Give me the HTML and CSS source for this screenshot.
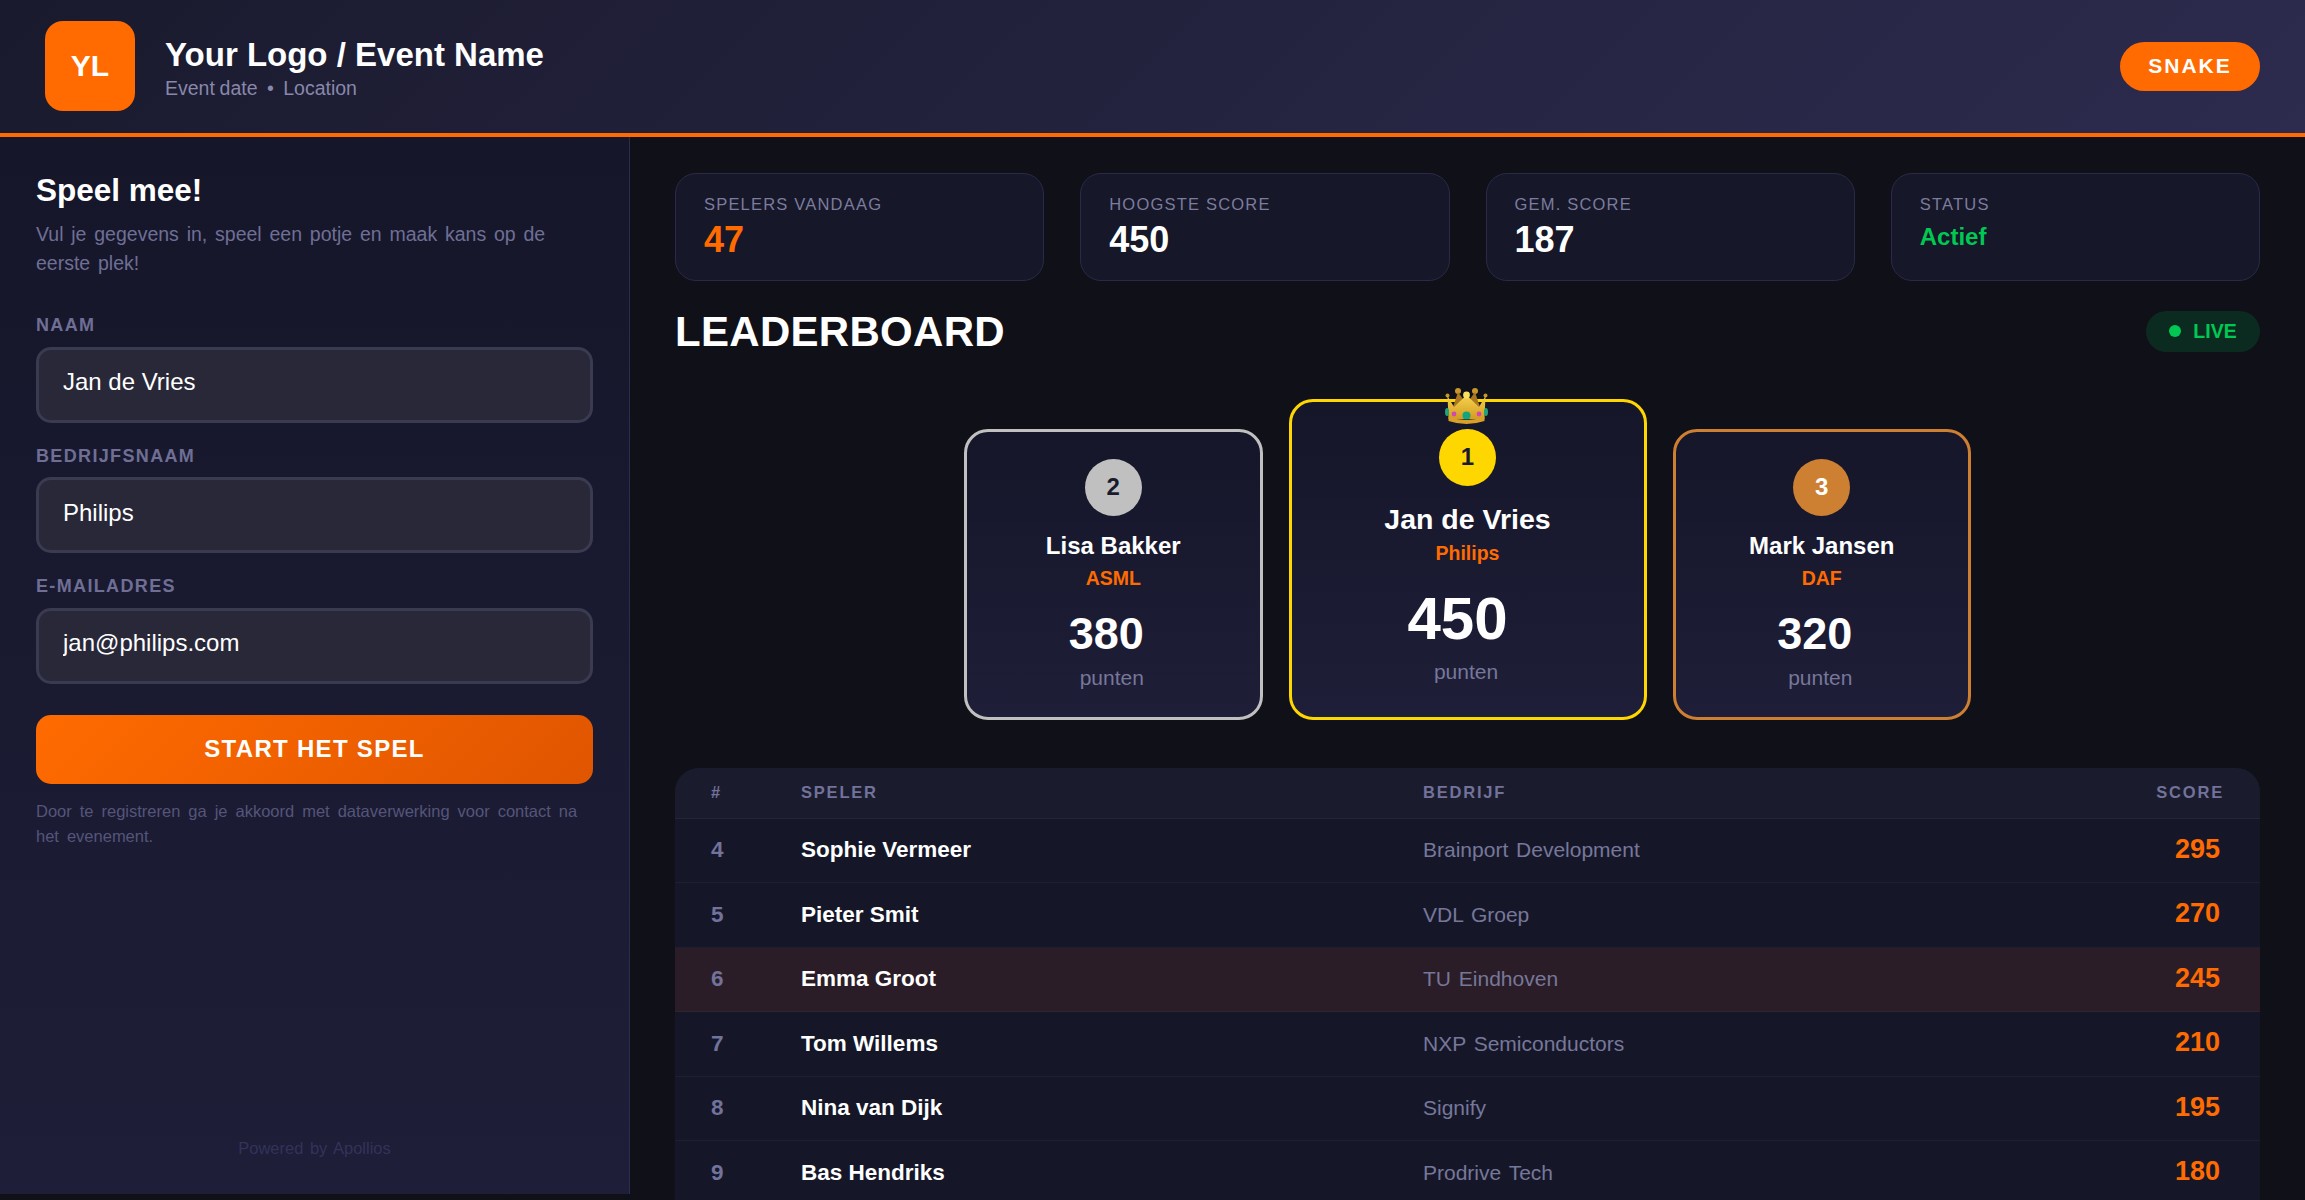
FILE: index.html
```html
<!DOCTYPE html>
<html lang="nl">
<head>
  <meta charset="UTF-8" />
  <title>Leaderboard - Snake</title>
  <link rel="stylesheet" href="styles.css">
</head>
<body>

  <div class="topbar">
    <div class="brand">
      <div class="logo">YL</div>
      <div>
        <div class="event-name">Your Logo / Event Name</div>
        <div class="event-meta">Event date &nbsp;•&nbsp; Location</div>
      </div>
    </div>
    <div class="game-badge">SNAKE</div>
  </div>

  <div class="layout">
    <div class="sidebar">
      <h2>Speel mee!</h2>
      <p class="intro">Vul je gegevens in, speel een potje en maak kans op de eerste plek!</p>

      <label class="field">
        <span>NAAM</span>
        <input type="text" value="Jan de Vries">
      </label>
      <label class="field">
        <span>BEDRIJFSNAAM</span>
        <input type="text" value="Philips">
      </label>
      <label class="field">
        <span>E-MAILADRES</span>
        <input type="text" value="jan@philips.com">
      </label>

      <button class="btn-start">START HET SPEL</button>
      <p class="legal">Door te registreren ga je akkoord met dataverwerking voor contact na het evenement.</p>
      <div class="powered">Powered by Apollios</div>
    </div>

    <div class="main">
      <div class="stats">
        <div class="stat">
          <div class="stat-label">SPELERS VANDAAG</div>
          <div class="stat-value orange">47</div>
        </div>
        <div class="stat">
          <div class="stat-label">HOOGSTE SCORE</div>
          <div class="stat-value">450</div>
        </div>
        <div class="stat">
          <div class="stat-label">GEM. SCORE</div>
          <div class="stat-value">187</div>
        </div>
        <div class="stat">
          <div class="stat-label">STATUS</div>
          <div class="stat-value status">Actief</div>
        </div>
      </div>

      <div class="board-head">
        <h1>LEADERBOARD</h1>
        <div class="live"><i></i>LIVE</div>
      </div>

      <div class="podium">
        <div class="pod silver">
          <div class="medal">2</div>
          <div class="pod-name">Lisa Bakker</div>
          <div class="pod-company">ASML</div>
          <div class="pod-score">380</div>
          <div class="pod-unit">punten</div>
        </div>

        <div class="pod gold">
          <svg class="crown" viewBox="0 0 43 37">
            <defs>
              <linearGradient id="crownBase" x1="0" y1="0" x2="0" y2="1">
                <stop offset="0" stop-color="#f7d44e"/>
                <stop offset="1" stop-color="#d39c22"/>
              </linearGradient>
            </defs>
            <circle cx="2.5" cy="7.5" r="2" fill="#c4962f"/>
            <circle cx="40.5" cy="7.5" r="2" fill="#c4962f"/>
            <circle cx="13" cy="3" r="3" fill="#c9982c"/>
            <circle cx="30" cy="3" r="3" fill="#c9982c"/>
            <path d="M13 4 L21.5 16 L30 4 L36 22 L7 22 Z" fill="#a9771f"/>
            <path d="M2.5 8 L9 19 L21.5 7 L34 19 L40.5 8 L39.5 31 L3.5 31 Z" fill="url(#crownBase)"/>
            <circle cx="21.5" cy="7" r="3.4" fill="#fbe05e"/>
            <path d="M3.5 29 Q21.5 35 39.5 29 L39.5 33 Q21.5 39 3.5 33 Z" fill="#d6a02a"/>
            <ellipse cx="2" cy="24" rx="2" ry="4" fill="#1fa37a"/>
            <ellipse cx="41" cy="24" rx="2" ry="4" fill="#1fa37a"/>
            <circle cx="9" cy="26" r="2.4" fill="#d248b0"/>
            <circle cx="34" cy="26" r="2.4" fill="#d248b0"/>
            <circle cx="21.5" cy="27.5" r="4" fill="#12a67c"/>
          </svg>
          <div class="medal">1</div>
          <div class="pod-name">Jan de Vries</div>
          <div class="pod-company">Philips</div>
          <div class="pod-score">450</div>
          <div class="pod-unit">punten</div>
        </div>

        <div class="pod bronze">
          <div class="medal">3</div>
          <div class="pod-name">Mark Jansen</div>
          <div class="pod-company">DAF</div>
          <div class="pod-score">320</div>
          <div class="pod-unit">punten</div>
        </div>
      </div>

      <div class="table-wrap">
        <table>
          <thead>
            <tr>
              <th class="col-rank">#</th>
              <th class="col-player">SPELER</th>
              <th>BEDRIJF</th>
              <th class="col-score">SCORE</th>
            </tr>
          </thead>
          <tbody>
            <tr>
              <td class="rank">4</td>
              <td class="player">Sophie Vermeer</td>
              <td class="company">Brainport Development</td>
              <td class="score">295</td>
            </tr>
            <tr>
              <td class="rank">5</td>
              <td class="player">Pieter Smit</td>
              <td class="company">VDL Groep</td>
              <td class="score">270</td>
            </tr>
            <tr class="highlight">
              <td class="rank">6</td>
              <td class="player">Emma Groot</td>
              <td class="company">TU Eindhoven</td>
              <td class="score">245</td>
            </tr>
            <tr>
              <td class="rank">7</td>
              <td class="player">Tom Willems</td>
              <td class="company">NXP Semiconductors</td>
              <td class="score">210</td>
            </tr>
            <tr>
              <td class="rank">8</td>
              <td class="player">Nina van Dijk</td>
              <td class="company">Signify</td>
              <td class="score">195</td>
            </tr>
            <tr>
              <td class="rank">9</td>
              <td class="player">Bas Hendriks</td>
              <td class="company">Prodrive Tech</td>
              <td class="score">180</td>
            </tr>
          </tbody>
        </table>
      </div>
    </div>
  </div>

</body>
</html>
```

FILE: styles.css
```css
* {
  box-sizing: border-box;
}
html, body {
  height: 1200px;
  overflow: hidden;
}
body {
  margin: 0;
  font-family: "Liberation Sans", Arial, sans-serif;
  background-color: #0f1018;
  color: #fff;
}

/* Top bar */
.topbar {
  height: 136.5px;
  display: flex;
  justify-content: space-between;
  align-items: center;
  padding: 0 45px;
  background: linear-gradient(135deg, #1a1a2e, #2d2b4e);
  border-bottom: 4.5px solid #ff6b00;
}
.brand {
  display: flex;
  align-items: center;
  gap: 30px;
}
.logo {
  width: 90px;
  height: 90px;
  display: flex;
  align-items: center;
  justify-content: center;
  background-color: #ff6b00;
  border-radius: 18px;
  font-size: 30px;
  font-weight: bold;
}
.event-name {
  margin-top: 3px;
  font-size: 33px;
  line-height: 40px;
  font-weight: bold;
}
.event-meta {
  margin-top: 1px;
  font-size: 19.5px;
  line-height: 24px;
  word-spacing: -0.7px;
  color: #8888aa;
}
.game-badge {
  width: 140px;
  height: 49.5px;
  display: flex;
  align-items: center;
  justify-content: center;
  background-color: #ff6b00;
  border-radius: 25px;
  font-size: 21px;
  font-weight: bold;
  letter-spacing: 2px;
}

.layout {
  display: flex;
  height: 1057.5px;
}

/* Registratie */
.sidebar {
  width: 630px;
  flex-shrink: 0;
  display: flex;
  flex-direction: column;
  padding: 34px 36px 36px;
  background: linear-gradient(180deg, #151629, #1e1e38);
  border-right: 1.5px solid #2d2b4e;
}
.sidebar h2 {
  margin: 0;
  font-size: 31.5px;
  line-height: 38px;
}
.intro {
  margin: 11px 0 36px;
  font-size: 19.5px;
  line-height: 29.25px;
  word-spacing: 2.4px;
  color: #6f6f95;
}
.field {
  display: block;
  margin-bottom: 22px;
}
.field span {
  display: block;
  margin-bottom: 10.5px;
  font-size: 18px;
  line-height: 22px;
  font-weight: bold;
  letter-spacing: 1.35px;
  color: #6f6f95;
}
.field input {
  display: block;
  width: 100%;
  height: 76px;
  padding: 0 24px 5px;
  background-color: #282839;
  border: 3px solid #3a3a50;
  border-radius: 15px;
  font-family: inherit;
  font-size: 24px;
  color: #fff;
}
.btn-start {
  width: 100%;
  height: 69px;
  margin-top: 9px;
  background: linear-gradient(135deg, #ff6b00, #e05500);
  border: none;
  border-radius: 15px;
  font-family: inherit;
  font-size: 24px;
  font-weight: bold;
  letter-spacing: 1.3px;
  color: #fff;
}
.legal {
  margin: 15px 0 0;
  font-size: 16.5px;
  line-height: 25.5px;
  word-spacing: 3.4px;
  color: #55557a;
}
.powered {
  margin-top: auto;
  text-align: center;
  font-size: 16.5px;
  line-height: 20px;
  word-spacing: 2px;
  color: #33335a;
}

/* Hoofdgedeelte */
.main {
  flex: 1;
  min-width: 0;
  padding: 36px 45px 0;
}
.stats {
  display: grid;
  grid-template-columns: repeat(4, 1fr);
  gap: 36px;
}
.stat {
  height: 108px;
  padding: 19px 28px 0;
  background-color: #161729;
  border: 1.5px solid #2a2a48;
  border-radius: 21px;
}
.stat-label {
  font-size: 16.5px;
  line-height: 22px;
  letter-spacing: 1.2px;
  color: #7c7c9e;
}
.stat-value {
  margin-top: 4px;
  font-size: 36px;
  line-height: 42px;
  font-weight: bold;
}
.stat-value.orange {
  color: #ff6b00;
}
.stat-value.status {
  margin-top: 1px;
  font-size: 24px;
  color: #00c853;
}

.board-head {
  display: flex;
  justify-content: space-between;
  align-items: center;
  margin-top: 30px;
}
.board-head h1 {
  margin: 0;
  font-size: 42px;
  line-height: 41px;
  letter-spacing: 0.3px;
}
.live {
  width: 114px;
  height: 41px;
  display: flex;
  align-items: center;
  justify-content: center;
  gap: 12px;
  background-color: rgba(0, 200, 83, 0.15);
  border-radius: 21px;
  font-size: 19.5px;
  font-weight: bold;
  color: #00c853;
}
.live i {
  width: 12px;
  height: 12px;
  border-radius: 50%;
  background-color: #00c853;
}

/* Podium */
.podium {
  display: flex;
  justify-content: center;
  align-items: flex-end;
  gap: 26px;
  margin-top: 47px;
}
.pod {
  position: relative;
  width: 298.5px;
  height: 291px;
  padding-top: 27px;
  display: flex;
  flex-direction: column;
  align-items: center;
  text-align: center;
  background: linear-gradient(180deg, #151629, #1e1e38);
  border: 3px solid #c0c0c0;
  border-radius: 24px;
}
.pod.gold {
  width: 358px;
  height: 321px;
  border-color: #ffd700;
}
.pod.bronze {
  border-color: #cd7f32;
}
.crown {
  position: absolute;
  top: -14px;
  left: 153.5px;
  width: 43px;
  height: 37px;
}
.medal {
  width: 57px;
  height: 57px;
  display: flex;
  align-items: center;
  justify-content: center;
  flex-shrink: 0;
  border-radius: 50%;
  background-color: #c0c0c0;
  font-size: 24px;
  font-weight: bold;
  color: #1a1a2e;
}
.gold .medal {
  background-color: #ffd700;
}
.bronze .medal {
  background-color: #cd7f32;
  color: #fff;
}
.pod-name {
  margin-top: 16.5px;
  font-size: 24px;
  line-height: 28px;
  font-weight: bold;
}
.pod-company {
  margin-top: 7px;
  font-size: 19.5px;
  line-height: 22px;
  font-weight: bold;
  color: #ff6b00;
}
.pod-score {
  margin-top: 18.5px;
  padding-right: 14px;
  font-size: 45px;
  line-height: 52px;
  font-weight: bold;
}
.pod-unit {
  margin-top: 6.5px;
  padding-right: 3px;
  font-size: 21px;
  line-height: 24px;
  color: #77779a;
}
.gold .pod-name {
  margin-top: 17.5px;
  font-size: 28.5px;
  line-height: 32px;
}
.gold .pod-score {
  margin-top: 20.5px;
  padding-right: 20px;
  font-size: 60px;
  line-height: 68px;
}
.gold .pod-unit {
  margin-top: 7.5px;
}

/* Tabel */
.table-wrap {
  margin-top: 48px;
  background-color: #151729;
  border-radius: 24px 24px 0 0;
  overflow: hidden;
}
table {
  width: 100%;
  table-layout: fixed;
  border-collapse: separate;
  border-spacing: 0;
}
th {
  height: 51px;
  padding: 0 36px;
  text-align: left;
  font-size: 16.5px;
  letter-spacing: 1.8px;
  color: #72729a;
  background-color: #1a1c2e;
  border-bottom: 1.5px solid #24253b;
}
th.col-rank {
  width: 90px;
}
th.col-player {
  width: 622px;
}
th.col-score {
  width: 300px;
  text-align: right;
}
td {
  height: 64.5px;
  padding: 0 36px;
  border-bottom: 1.5px solid #1e1f33;
}
.highlight td {
  background-color: #2a1d27;
  border-bottom-color: #33222a;
}
.rank {
  font-size: 22.5px;
  font-weight: bold;
  color: #72729a;
}
.player {
  font-size: 22.5px;
  font-weight: bold;
}
.company {
  font-size: 21px;
  word-spacing: 2px;
  color: #77779a;
}
td.score {
  padding-right: 40px;
  padding-bottom: 2px;
  text-align: right;
  font-size: 27px;
  font-weight: bold;
  color: #ff6b00;
}
```
